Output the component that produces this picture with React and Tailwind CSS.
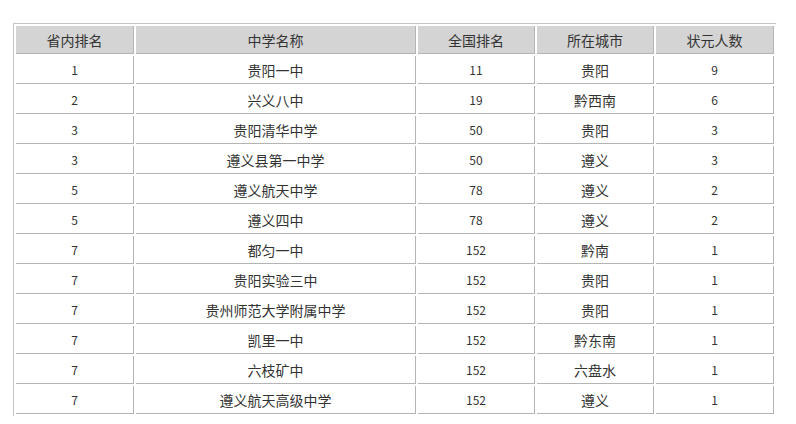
import React from 'react';

const rows = [
  ['1', '贵阳一中', '11', '贵阳', '9'],
  ['2', '兴义八中', '19', '黔西南', '6'],
  ['3', '贵阳清华中学', '50', '贵阳', '3'],
  ['3', '遵义县第一中学', '50', '遵义', '3'],
  ['5', '遵义航天中学', '78', '遵义', '2'],
  ['5', '遵义四中', '78', '遵义', '2'],
  ['7', '都匀一中', '152', '黔南', '1'],
  ['7', '贵阳实验三中', '152', '贵阳', '1'],
  ['7', '贵州师范大学附属中学', '152', '贵阳', '1'],
  ['7', '凯里一中', '152', '黔东南', '1'],
  ['7', '六枝矿中', '152', '六盘水', '1'],
  ['7', '遵义航天高级中学', '152', '遵义', '1'],
];

const headers = ['省内排名', '中学名称', '全国排名', '所在城市', '状元人数'];
const widths = ['w-[118px]', 'w-[280px]', 'w-[117px]', 'w-[117px]', 'w-[118px]'];

const cell = 'h-[28px] p-0 text-center align-middle border-r border-b border-[#b4b4b4]';

export default function App() {
  return (
    <div className="w-[796px] h-[424px] bg-white pt-[23px] pl-[13px] overflow-hidden"
      style={{ fontFamily: '"Noto Sans CJK SC", sans-serif' }}>
      <table className="table-fixed w-[763px] border-separate border-spacing-[2px] border-t border-l border-[#c4c4c4] text-[#333] text-[14px] leading-none">
        <thead>
          <tr>
            {headers.map((h, i) => (
              <th key={h} className={`${cell} ${widths[i]} bg-[#d4d4d4] font-normal`}>{h}</th>
            ))}
          </tr>
        </thead>
        <tbody>
          {rows.map((r, ri) => (
            <tr key={ri}>
              {r.map((v, ci) => (
                <td key={ci} className={`${cell} ${/^\d+$/.test(v) ? 'text-[12px]' : ''}`}>{v}</td>
              ))}
            </tr>
          ))}
        </tbody>
      </table>
    </div>
  );
}
